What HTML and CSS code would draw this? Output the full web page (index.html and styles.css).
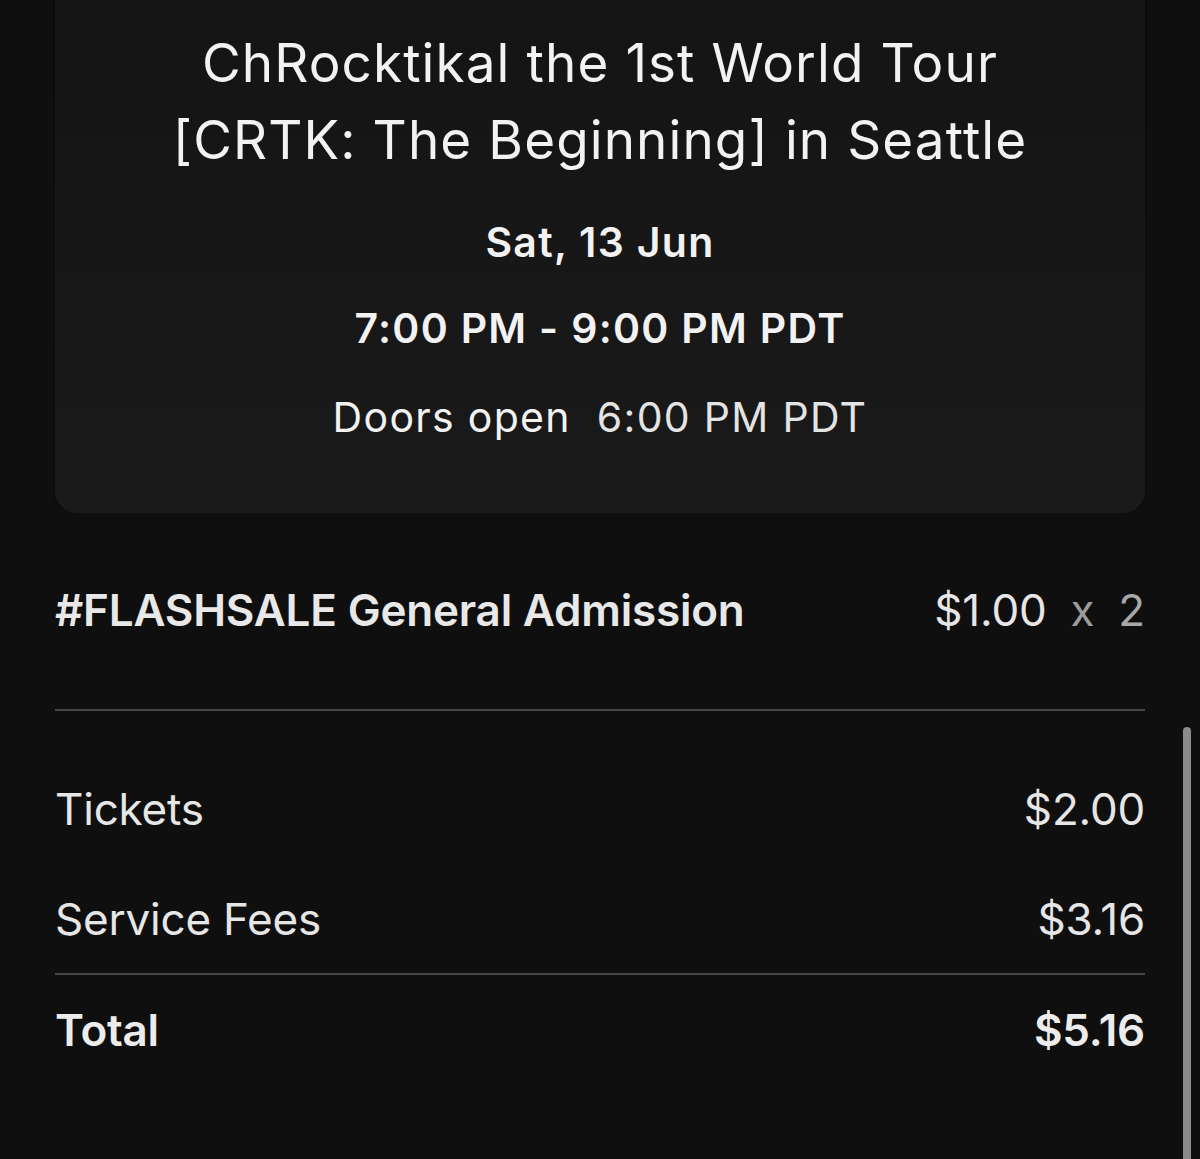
FILE: index.html
```html
<!DOCTYPE html>
<html lang="en">
<head>
<meta charset="utf-8">
<title>Order summary</title>
<link rel="stylesheet" href="styles.css">
</head>
<body>
<main class="page">
  <section class="event-card">
    <h1 class="event-title">ChRocktikal the 1st World Tour<br>[CRTK: The Beginning] in Seattle</h1>
    <div class="event-meta">
      <p class="meta-line meta-strong">Sat, 13 Jun</p>
      <p class="meta-line meta-strong">7:00 PM - 9:00 PM PDT</p>
      <p class="meta-line"><span class="doors-label">Doors open</span><span class="doors-time">6:00 PM PDT</span></p>
    </div>
  </section>

  <section class="ticket-row">
    <span class="ticket-name">#FLASHSALE General Admission</span>
    <span class="ticket-price">$1.00<span class="qty-x">x</span><span class="qty">2</span></span>
  </section>

  <hr class="divider">

  <section class="summary">
    <div class="summary-row"><span>Tickets</span><span>$2.00</span></div>
    <div class="summary-row fees"><span>Service Fees</span><span>$3.16</span></div>
    <hr class="divider thin-gap">
    <div class="summary-row total"><span>Total</span><span>$5.16</span></div>
  </section>
</main>
<div class="scroll-thumb"></div>
</body>
</html>
```

FILE: styles.css
```css
html, body {
  margin: 0;
  padding: 0;
  background: #0f0f0f;
  height: 100%;
  overflow: hidden;
}

body {
  font-family: Inter, "Noto Sans", "Liberation Sans", sans-serif;
  color: #ececec;
  position: relative;
}

.page {
  padding: 0 55px;
  min-height: 100%;
}

.event-card {
  background: linear-gradient(to bottom, #141414 0%, #1a1a1a 100%);
  border-radius: 0 0 22px 22px;
  padding: 25px 10px 71px;
  text-align: center;
  box-shadow: -2px 0 0 #0c0c0c, 2px 0 0 #0c0c0c;
}

.event-title {
  margin: 0;
  font-size: 53px;
  line-height: 77px;
  font-weight: 400;
  color: #f2f2f2;
  letter-spacing: 1.1px;
}

.event-meta {
  display: flex;
  flex-direction: column;
  gap: 37px;
  margin-top: 39px;
}

.meta-line {
  margin: 0;
  font-size: 41px;
  line-height: 49px;
  color: #f2f2f2;
  letter-spacing: 1.3px;
}

.meta-line.meta-strong {
  font-weight: 600;
}

.meta-line:last-child {
  margin-top: 3px;
}

.doors-time {
  margin-left: 26px;
  color: #e4e4e4;
}

.ticket-row {
  display: flex;
  justify-content: space-between;
  align-items: baseline;
  margin-top: 71px;
  font-size: 44px;
  line-height: 53px;
  letter-spacing: -0.2px;
}

.ticket-name {
  font-weight: 600;
  color: #e8e8e8;
}

.ticket-price {
  color: #e6e6e6;
}

.qty-x {
  margin-left: 24px;
  color: #9c9c9c;
}

.qty {
  margin-left: 24px;
  color: #a8a8a8;
}

.divider {
  border: 0;
  height: 2px;
  background: #454545;
  margin: 72px 0 0;
}

.summary {
  display: flex;
  flex-direction: column;
  padding-top: 72px;
}

.summary-row {
  display: flex;
  justify-content: space-between;
  align-items: baseline;
  font-size: 44px;
  line-height: 53px;
  color: #e6e6e6;
  letter-spacing: -0.2px;
}

.summary-row.fees {
  margin-top: 57px;
}

.divider.thin-gap {
  margin-top: 27px;
  margin-bottom: 29px;
}

.summary-row.total {
  font-weight: 600;
  color: #ececec;
}

.scroll-thumb {
  position: absolute;
  left: 1183px;
  top: 727px;
  width: 8px;
  height: 460px;
  border-radius: 4px;
  background: #8a8a8a;
}
```
